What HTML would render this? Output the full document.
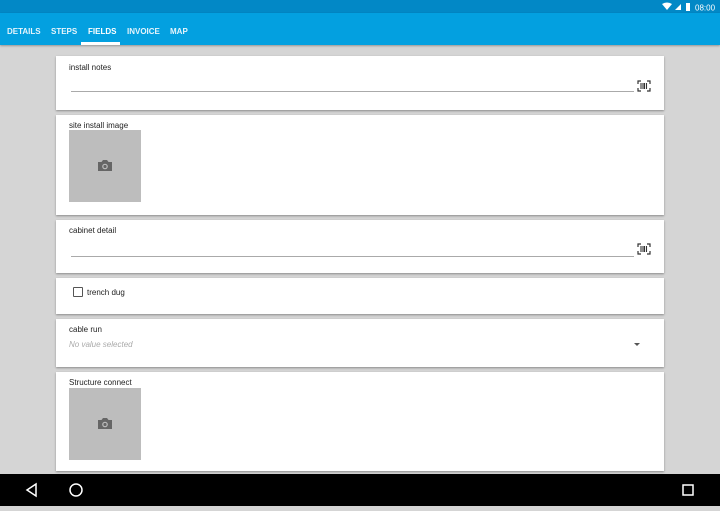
<!DOCTYPE html><html><head><style>
body{margin:0;width:720px;height:506px;overflow:hidden;background:#d5d5d5;font-family:"Liberation Sans",sans-serif;position:relative}
.sb{position:absolute;top:0;left:0;width:720px;height:13px;background:#0288c6}
.tb{position:absolute;top:13px;left:0;width:720px;height:32px;background:#03a0e0;box-shadow:0 1px 2px rgba(0,0,0,.3)}
.tab{position:absolute;top:14px;font-size:8px;font-weight:bold;color:#e6f4fb}
.card{position:absolute;left:56px;width:608px;background:#fff;box-shadow:0 1px 2px rgba(0,0,0,.35)}
.lbl{position:absolute;left:13px;font-size:8px;color:#222}
.line{position:absolute;left:15px;width:563px;height:1px;background:#aaa}
.img{position:absolute;left:13px;width:72px;height:72px;background:#bdbdbd}
.nav{position:absolute;top:474px;left:0;width:720px;height:32px;background:#000}
</style></head><body>
<div class="sb"><svg style="position:absolute;left:662px;top:2px" width="60" height="10"><path d="M0 2 Q5 -1 10 2 L5 8Z" fill="#fff"/><path d="M13 8 L19 2 L19 8Z" fill="#fff"/><rect x="24" y="1" width="4" height="8" fill="#fff"/><text x="33" y="8.5" font-size="8" fill="#fff" font-family="Liberation Sans">08:00</text></svg></div>
<div class="tb">
<span class="tab" style="left:7px">DETAILS</span><span class="tab" style="left:51px">STEPS</span><span class="tab" style="left:88px;color:#fff">FIELDS</span><span class="tab" style="left:127px">INVOICE</span><span class="tab" style="left:170px">MAP</span>
<div style="position:absolute;left:81px;top:29px;width:39px;height:3px;background:#fff"></div></div>
<div class="card" style="top:56px;height:54px"><span class="lbl" style="top:7px">install notes</span><div class="line" style="top:35px"></div>
<svg style="position:absolute;left:581px;top:24px" width="14" height="12"><path d="M1 4V1H4M10 1H13V4M13 8V11H10M4 11H1V8" stroke="#333" fill="none" stroke-width="1.2"/><path d="M4 3v6M6 3v6M7.5 3v6M9.5 3v6" stroke="#333" stroke-width="1.1"/></svg></div>
<div class="card" style="top:115px;height:100px"><span class="lbl" style="top:6px">site install image</span><div class="img" style="top:15px"><svg style="position:absolute;left:28px;top:29px" width="16" height="13"><path d="M1 3h3.5l1.5-2h4L11.5 3H15v9H1z" fill="#666"/><circle cx="8" cy="7.5" r="2.8" fill="#bdbdbd"/><circle cx="8" cy="7.5" r="1.6" fill="#666"/></svg></div></div>
<div class="card" style="top:220px;height:53px"><span class="lbl" style="top:6px">cabinet detail</span><div class="line" style="top:36px"></div>
<svg style="position:absolute;left:581px;top:23px" width="14" height="12"><path d="M1 4V1H4M10 1H13V4M13 8V11H10M4 11H1V8" stroke="#333" fill="none" stroke-width="1.2"/><path d="M4 3v6M6 3v6M7.5 3v6M9.5 3v6" stroke="#333" stroke-width="1.1"/></svg></div>
<div class="card" style="top:278px;height:36px"><div style="position:absolute;left:17px;top:9px;width:8px;height:8px;border:1px solid #555;border-radius:1px"></div><span class="lbl" style="left:31px;top:10px">trench dug</span></div>
<div class="card" style="top:319px;height:48px"><span class="lbl" style="top:6px">cable run</span><span class="lbl" style="top:21px;font-style:italic;color:#aaa">No value selected</span><div style="position:absolute;left:578px;top:24px;border:3px solid transparent;border-top:3px solid #555"></div></div>
<div class="card" style="top:372px;height:99px"><span class="lbl" style="top:6px">Structure connect</span><div class="img" style="top:16px"><svg style="position:absolute;left:28px;top:29px" width="16" height="13"><path d="M1 3h3.5l1.5-2h4L11.5 3H15v9H1z" fill="#666"/><circle cx="8" cy="7.5" r="2.8" fill="#bdbdbd"/><circle cx="8" cy="7.5" r="1.6" fill="#666"/></svg></div></div>
<div class="nav"><svg width="720" height="32"><path d="M36 10L27 16L36 22Z" stroke="#fff" stroke-width="1.5" fill="none"/><circle cx="76" cy="16" r="6" stroke="#fff" stroke-width="1.5" fill="none"/><rect x="683" y="11" width="10" height="10" stroke="#fff" stroke-width="1.5" fill="none"/></svg></div>
</body></html>
